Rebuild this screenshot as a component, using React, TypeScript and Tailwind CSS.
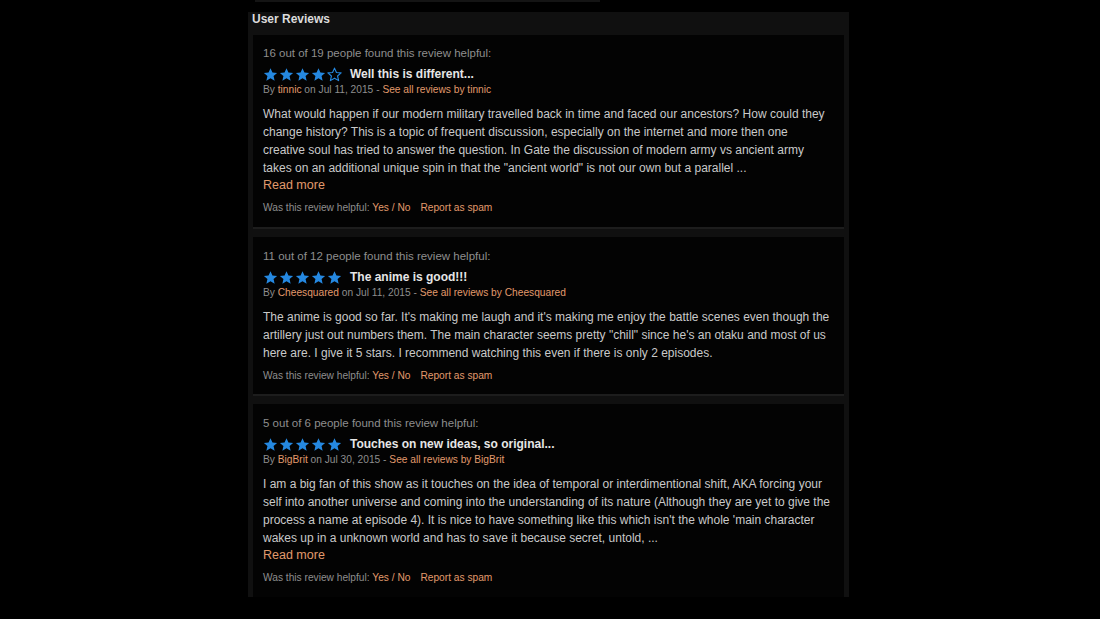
import React from "react";

type Review = {
  helpful: string;
  stars: number;
  title: string;
  author: string;
  date: string;
  lines: string[];
  readMore: boolean;
};

const reviews: Review[] = [
  {
    helpful: "16 out of 19 people found this review helpful:",
    stars: 4,
    title: "Well this is different...",
    author: "tinnic",
    date: "Jul 11, 2015",
    lines: [
      "What would happen if our modern military travelled back in time and faced our ancestors? How could they",
      "change history? This is a topic of frequent discussion, especially on the internet and more then one",
      "creative soul has tried to answer the question. In Gate the discussion of modern army vs ancient army",
      'takes on an additional unique spin in that the "ancient world" is not our own but a parallel ...',
    ],
    readMore: true,
  },
  {
    helpful: "11 out of 12 people found this review helpful:",
    stars: 5,
    title: "The anime is good!!!",
    author: "Cheesquared",
    date: "Jul 11, 2015",
    lines: [
      "The anime is good so far. It's making me laugh and it's making me enjoy the battle scenes even though the",
      'artillery just out numbers them. The main character seems pretty "chill" since he\'s an otaku and most of us',
      "here are. I give it 5 stars. I recommend watching this even if there is only 2 episodes.",
    ],
    readMore: false,
  },
  {
    helpful: "5 out of 6 people found this review helpful:",
    stars: 5,
    title: "Touches on new ideas, so original...",
    author: "BigBrit",
    date: "Jul 30, 2015",
    lines: [
      "I am a big fan of this show as it touches on the idea of temporal or interdimentional shift, AKA forcing your",
      "self into another universe and coming into the understanding of its nature (Although they are yet to give the",
      "process a name at episode 4). It is nice to have something like this which isn't the whole 'main character",
      "wakes up in a unknown world and has to save it because secret, untold, ...",
    ],
    readMore: true,
  },
];

const Star = ({ filled }: { filled: boolean }) => (
  <svg width="15" height="15" viewBox="0 0 24 24" className="shrink-0">
    <path
      d="M12 1.8l3.1 6.9 7.5.7-5.7 5 1.7 7.4L12 17.9l-6.6 3.9 1.7-7.4-5.7-5 7.5-.7z"
      fill={filled ? "#2588e0" : "none"}
      stroke="#2588e0"
      strokeWidth={filled ? 0 : 1.8}
      strokeLinejoin="round"
    />
  </svg>
);

const ReviewCard = ({ review, first, last }: { review: Review; first: boolean; last: boolean }) => (
  <div
    className={clsx(
      "bg-[#030303] px-[10px]",
      first ? "pt-[11px]" : "pt-[12px]",
      review.readMore ? "pb-[12px]" : "pb-[11px]",
      !last && "border-b-2 border-[#1d1d1d]"
    )}
  >
    <div className="text-[11.5px] leading-[14px] text-[#8e8e8e]">{review.helpful}</div>
    <div className="mt-[5px] flex h-[18px] items-center gap-[1px]">
      {[0, 1, 2, 3, 4].map((i) => (
        <Star key={i} filled={i < review.stars} />
      ))}
      <span className="ml-[7px] text-[12px] font-bold text-[#e6e6e6]">{review.title}</span>
    </div>
    <div className="text-[10.2px] leading-[14px] text-[#8e8e8e]">
      By <span className="text-[#e19a6c]">{review.author}</span> on {review.date} -{" "}
      <span className="text-[#e19a6c]">See all reviews by {review.author}</span>
    </div>
    <div className="mt-[8px] text-[12px] leading-[18px] text-[#c9c9c9]">
      {review.lines.map((l, i) => (
        <div key={i}>{l}</div>
      ))}
    </div>
    {review.readMore && (
      <div className="text-[12.5px] leading-[16px] text-[#e19a6c]">Read more</div>
    )}
    <div
      className={clsx(
        "text-[10.2px] leading-[14px] text-[#8e8e8e]",
        review.readMore ? "mt-[8px]" : "mt-[7px]"
      )}
    >
      Was this review helpful: <span className="text-[#e19a6c]">Yes / No</span>
      <span className="ml-[10px] text-[#e19a6c]">Report as spam</span>
    </div>
  </div>
);

export default function App() {
  return (
    <div className="h-[619px] w-[1100px] overflow-hidden bg-black font-['Liberation_Sans',Arial,sans-serif]">
      <div className="ml-[255px] h-[2px] w-[345px] bg-[#141414]" />
      <div className="ml-[248px] mt-[10px] w-[601px] bg-[#101010]">
        <div className="h-[23px] px-[4px] pt-[1px] text-[12px] font-bold leading-[12px] text-[#dcdcdc]">
          User Reviews
        </div>
        <div className="flex flex-col gap-[8px] px-[5px]">
          {reviews.map((r, i) => (
            <ReviewCard
              key={r.author}
              review={r}
              first={i === 0}
              last={i === reviews.length - 1}
            />
          ))}
        </div>
      </div>
    </div>
  );
}

function clsx(...parts: (string | false | undefined)[]) {
  return parts.filter(Boolean).join(" ");
}
